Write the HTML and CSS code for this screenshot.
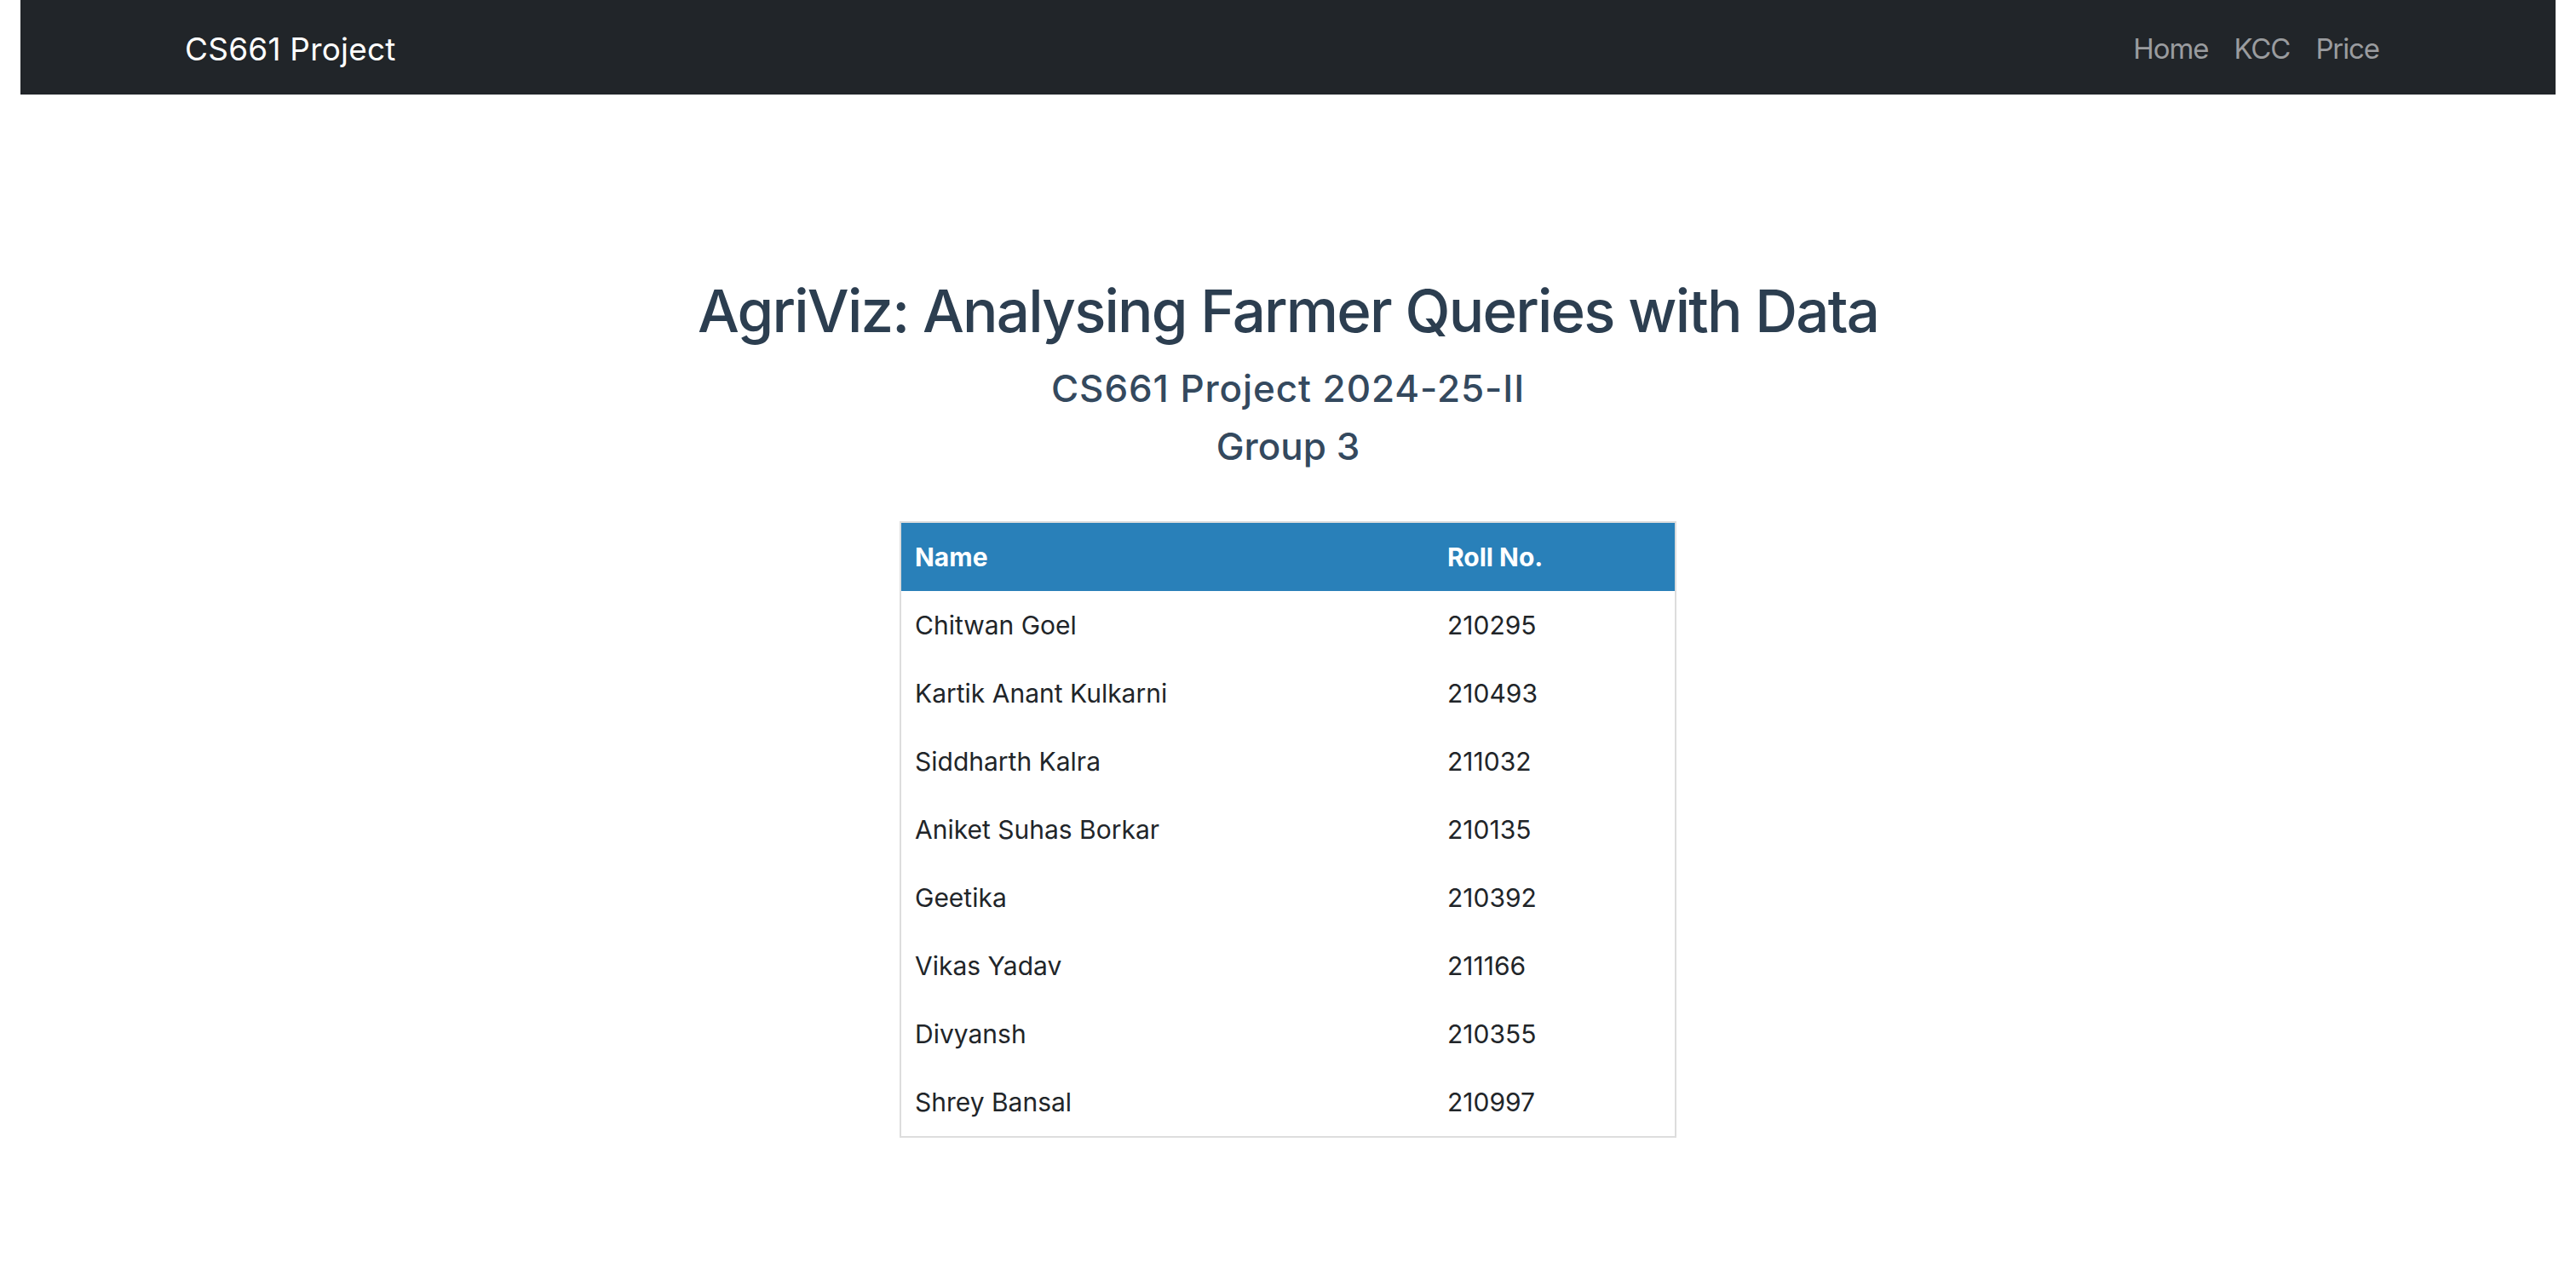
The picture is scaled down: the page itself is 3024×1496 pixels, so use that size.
FILE: index.html
```html
<!DOCTYPE html>
<html lang="en">
<head>
<meta charset="utf-8">
<title>AgriViz</title>
<link rel="stylesheet" href="styles.css">
</head>
<body>
<nav class="navbar">
  <div class="nav-inner">
    <a class="brand" href="#">CS661 Project</a>
    <ul class="nav-links">
      <li><a href="#">Home</a></li>
      <li><a href="#">KCC</a></li>
      <li><a href="#">Price</a></li>
    </ul>
  </div>
</nav>
<main class="content">
  <h1 class="title">AgriViz: Analysing Farmer Queries with Data</h1>
  <h2 class="subtitle">CS661 Project 2024-25-II</h2>
  <h2 class="subtitle group">Group 3</h2>
  <table class="members">
    <thead>
      <tr><th class="col-name">Name</th><th>Roll No.</th></tr>
    </thead>
    <tbody>
      <tr><td>Chitwan Goel</td><td>210295</td></tr>
      <tr><td>Kartik Anant Kulkarni</td><td>210493</td></tr>
      <tr><td>Siddharth Kalra</td><td>211032</td></tr>
      <tr><td>Aniket Suhas Borkar</td><td>210135</td></tr>
      <tr><td>Geetika</td><td>210392</td></tr>
      <tr><td>Vikas Yadav</td><td>211166</td></tr>
      <tr><td>Divyansh</td><td>210355</td></tr>
      <tr><td>Shrey Bansal</td><td>210997</td></tr>
    </tbody>
  </table>
</main>
</body>
</html>
```
FILE: styles.css
```css
html, body {
  margin: 0;
  padding: 0;
  background: #ffffff;
}
body {
  margin: 0 24px;
  font-family: Inter, "Noto Sans", "Liberation Sans", sans-serif;
  color: #212529;
}
.navbar {
  background: #212529;
  height: 111px;
}
.nav-inner {
  height: 100%;
  display: flex;
  align-items: center;
  justify-content: space-between;
  padding: 0 192px 0 193px;
}
.brand {
  color: #ffffff;
  text-decoration: none;
  font-size: 37px;
  line-height: 1;
  padding-top: 3px;
  letter-spacing: 0.2px;
}
.nav-links {
  list-style: none;
  margin: 0;
  padding: 0;
  display: flex;
  align-items: center;
  padding-top: 4px;
}
.nav-links a {
  display: block;
  color: #9a9c9f;
  text-decoration: none;
  font-size: 33px;
  line-height: 1;
  letter-spacing: -1.1px;
  padding: 0 15px;
}
.content {
  display: flex;
  flex-direction: column;
  align-items: center;
  padding-top: 213px;
}
.title {
  margin: 0;
  font-size: 69px;
  font-weight: 500;
  line-height: 1.2;
  color: #2c3e50;
  letter-spacing: -1.8px;
}
.subtitle {
  margin: 23px 0 0 0;
  font-size: 44px;
  font-weight: 500;
  line-height: 1.2;
  color: #34495e;
  letter-spacing: 0.9px;
}
.subtitle.group {
  margin-top: 15px;
  letter-spacing: 0;
}
.members {
  margin-top: 62px;
  width: 912px;
  border-collapse: collapse;
  border: 2px solid #dddddd;
  font-size: 30px;
}
.members th,
.members td {
  height: 80px;
  padding: 0 16px;
  text-align: left;
  vertical-align: middle;
  line-height: 1.2;
}
.members th {
  background: #2980b9;
  color: #ffffff;
  font-weight: 700;
}
.members td {
  color: #212529;
}
.col-name {
  width: 593px;
}
```
